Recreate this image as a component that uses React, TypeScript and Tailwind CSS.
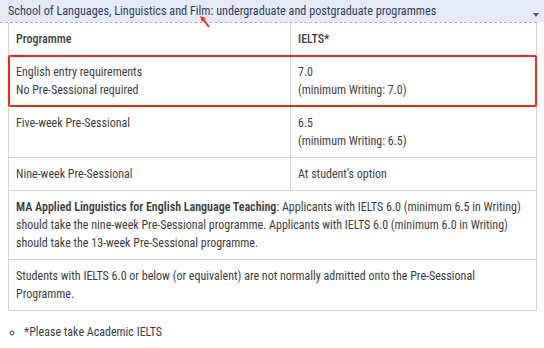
const rows = [
  { prog: ["Five-week Pre-Sessional"], ielts: ["6.5", "(minimum Writing: 6.5)"] },
  { prog: ["Nine-week Pre-Sessional"], ielts: ["At student's option"] },
];

const Cell = ({ lines, last = false }: { lines: string[]; last?: boolean }) => (
  <div className={last ? "px-[7px] py-[7px]" : "px-[7px] py-[7px] border-r border-[#d4d4d4]"}>
    {lines.map((l) => (
      <div key={l}>{l}</div>
    ))}
  </div>
);

export default function App() {
  return (
    <div className="relative w-[544px] h-[348px] overflow-hidden bg-white font-['Roboto_Condensed','Roboto',sans-serif] text-[12px] leading-[18px] text-[#3d3d3d]">
      {/* accordion header */}
      <div className="relative flex h-[22px] items-center bg-[#e5eaf6] pl-2 text-[12.2px] text-[#2e3d60]">
        School of Languages, Linguistics and Film: undergraduate and postgraduate programmes
        <span className="absolute right-[5px] top-[13px] h-0 w-0 border-x-[3px] border-t-[4px] border-x-transparent border-t-[#555]" />
      </div>

      {/* red arrow annotation */}
      <svg className="absolute left-[199px] top-[15px]" width="12" height="14" viewBox="0 0 12 14">
        <path d="M4 4 L10 12" stroke="#e8321e" strokeWidth="2" />
        <path d="M1 1 L7 3 L3 7 Z" fill="#e8321e" />
      </svg>

      <div className="w-[537px] border-t border-dashed border-[#b0b0b0] pl-2">
        <div className="border-x border-b border-[#d4d4d4]">
          <div className="grid grid-cols-[282px_1fr] border-b border-[#d4d4d4] font-medium">
            <Cell lines={["Programme"]} />
            <Cell lines={["IELTS*"]} last />
          </div>

          <div className="relative grid grid-cols-[282px_1fr] border-b border-[#d4d4d4]">
            <Cell lines={["English entry requirements", "No Pre-Sessional required"]} />
            <Cell lines={["7.0", "(minimum Writing: 7.0)"]} last />
            <div className="absolute -left-px -right-px -top-px -bottom-px rounded-[2px] border-2 border-[#ee2a1c]" />
          </div>

          {rows.map((r) => (
            <div key={r.prog[0]} className="grid grid-cols-[282px_1fr] border-b border-[#d4d4d4]">
              <Cell lines={r.prog} />
              <Cell lines={r.ielts} last />
            </div>
          ))}

          <div className="border-b border-[#d4d4d4] px-[7px] py-[7px]">
            <span className="font-semibold">MA Applied Linguistics for English Language Teaching</span>: Applicants with
            IELTS 6.0 (minimum 6.5 in Writing) should take the nine-week Pre-Sessional programme. Applicants with IELTS 6.0
            (minimum 6.0 in Writing) should take the 13-week Pre-Sessional programme.
          </div>

          <div className="px-[7px] py-[7px]">
            Students with IELTS 6.0 or below (or equivalent) are not normally admitted onto the Pre-Sessional Programme.
          </div>
        </div>
      </div>

      <ul className="mt-[12px] pl-6 list-[circle]">
        <li>*Please take Academic IELTS</li>
      </ul>
    </div>
  );
}
